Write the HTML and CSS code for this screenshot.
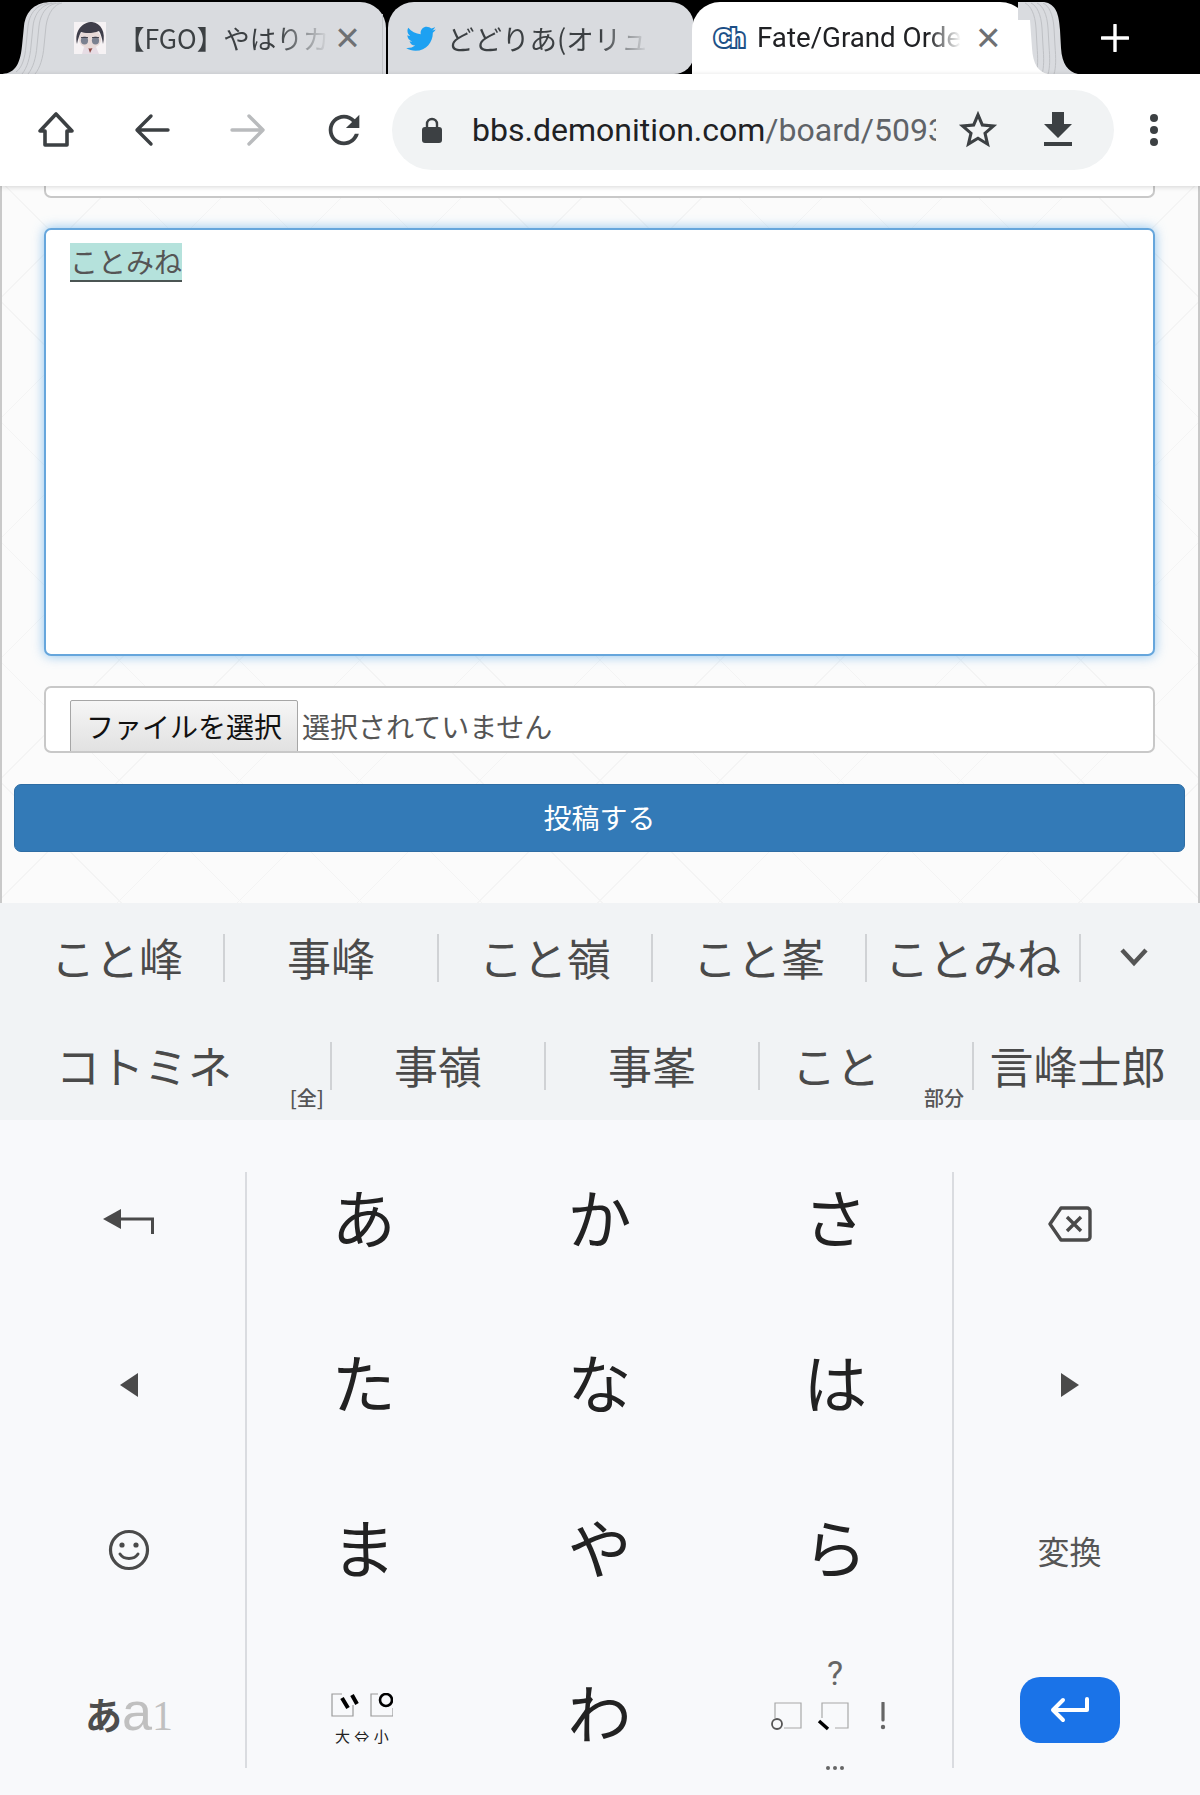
FILE: index.html
```html
<!DOCTYPE html>
<html lang="ja">
<head>
    <meta charset="UTF-8">
    <meta name="viewport" content="width=device-width, initial-scale=1.0">
    <title>Fate/Grand Order</title>
    <link rel="stylesheet" href="styles.css">
</head>
<body>
    <!-- Tab strip -->
    <div class="tabstrip">
        <svg class="stack stack-left" viewBox="0 0 62 74">
            <path d="M0 74 C14 74 20 66 22 46 L24 26 C26 10 36 2 52 2 L62 2 L62 74 Z" fill="#d9dbdf"/>
            <path d="M16 72 C22 68 25 58 26 46 L28 26 C30 10 40 3 52 3 M22 74 C27 68 30 58 31 46 L33 26 C35 10 45 3 56 3 M28 74 C33 68 36 58 37 46 L39 26 C41 10 50 3 60 3 M35 74 C40 68 43 58 44 46 L46 26 C48 12 55 4 62 3" fill="none" stroke="#bfc1c5" stroke-width="1"/>
        </svg>
        <div class="tab tab-first">
            <svg class="favicon" viewBox="0 0 32 32">
                <rect width="32" height="32" fill="#f6f2f4"/>
                <path d="M8 32 L10 25 H22 L25 32 Z" fill="#e6dce4"/>
                <path d="M14 25 L16 31 L19 25 Z" fill="#8f4a44"/>
                <ellipse cx="16" cy="17" rx="11" ry="9.5" fill="#e8dad8"/>
                <path d="M3 22 C0 8 9 0 18 0 C27 1 32 10 29 22 C28 16 27 12 25 9 C18 12 10 11 7 10 C5 14 4 17 3 22 Z" fill="#3f3e4a"/>
                <ellipse cx="10.5" cy="18.5" rx="3.6" ry="4" fill="#7b8190"/>
                <ellipse cx="21.5" cy="18.5" rx="3.6" ry="4" fill="#7b8190"/>
                <path d="M7 15.5 H14 M18 15.5 H25" stroke="#3f3e4a" stroke-width="0.9"/>
            </svg>
            <span class="tab-title">【FGO】やはりカ</span>
            <span class="tab-close">×</span>
            <i class="tab-edge"></i>
        </div>
        <div class="tab tab-second">
            <svg class="favicon bird" viewBox="0 0 24 24">
                <path fill="#1da1f2" d="M22.46 6c-.77.35-1.6.58-2.46.69.88-.53 1.56-1.37 1.88-2.38-.83.5-1.75.85-2.72 1.05C18.37 4.5 17.26 4 16 4c-2.35 0-4.27 1.92-4.27 4.29 0 .34.04.67.11.98C8.28 9.09 5.11 7.38 3 4.79c-.37.63-.58 1.37-.58 2.15 0 1.49.75 2.81 1.91 3.56-.71 0-1.37-.2-1.95-.5v.03c0 2.08 1.48 3.82 3.44 4.21a4.22 4.22 0 0 1-1.93.07 4.28 4.28 0 0 0 4 2.98 8.521 8.521 0 0 1-5.33 1.84c-.34 0-.68-.02-1.02-.06C3.44 20.29 5.7 21 8.12 21 16 21 20.33 14.46 20.33 8.79c0-.19 0-.37-.01-.56.84-.6 1.56-1.36 2.14-2.23z"/>
            </svg>
            <span class="tab-title">どどりあ(オリュ</span>
        </div>
        <div class="tab tab-active">
            <span class="ch-icon">Ch</span>
            <span class="tab-title">Fate/Grand Orde</span>
            <span class="tab-close">×</span>
        </div>
        <svg class="stack stack-right" viewBox="0 0 60 74">
            <path d="M0 2 L26 2 C38 4 41 14 42 30 L43 48 C44 64 50 72 60 74 L0 74 Z" fill="#d9dbdf"/>
            <path d="M18 74 C20 68 20 58 19 46 L18 28 C17 14 13 6 7 3 M24 74 C26 68 26 58 25 46 L24 28 C23 14 19 6 13 3 M30 74 C32 68 32 58 31 46 L30 28 C29 14 25 6 19 3 M36 74 C38 68 38 58 37 46 L36 28 C35 14 31 6 25 3" fill="none" stroke="#bfc1c5" stroke-width="1"/>
            <path d="M0 20 H12 L14 48 C15 64 20 72 30 74 L0 74 Z" fill="#fff"/>
        </svg>
        <span class="new-tab">
            <svg viewBox="0 0 28 28" width="28" height="28"><path d="M14 1V27M1 14H27" stroke="#fff" stroke-width="3.4" stroke-linecap="round"/></svg>
        </span>
    </div>

    <!-- Toolbar -->
    <div class="toolbar">
        <div class="tool-btn">
            <svg viewBox="0 0 40 40" width="40" height="40"><path d="M20 4 L4 21 H9 V35 H31 V21 H36 Z" fill="none" stroke="#3c4043" stroke-width="3.6" stroke-linejoin="round"/></svg>
        </div>
        <div class="tool-btn">
            <svg viewBox="0 0 40 40" width="40" height="40"><path d="M36 20 H6 M19 6 L5 20 L19 34" fill="none" stroke="#3c4043" stroke-width="3.4" stroke-linecap="round" stroke-linejoin="round"/></svg>
        </div>
        <div class="tool-btn">
            <svg viewBox="0 0 40 40" width="40" height="40"><path d="M4 20 H34 M21 6 L35 20 L21 34" fill="none" stroke="#b9bbbd" stroke-width="3.4" stroke-linecap="round" stroke-linejoin="round"/></svg>
        </div>
        <div class="tool-btn">
            <svg viewBox="0 0 24 24" width="46" height="46"><path fill="#3c4043" d="M17.65 6.35C16.2 4.9 14.21 4 12 4c-4.42 0-7.99 3.58-7.99 8s3.57 8 7.99 8c3.73 0 6.84-2.55 7.73-6h-2.08c-.82 2.33-3.04 4-5.65 4-3.31 0-6-2.69-6-6s2.69-6 6-6c1.66 0 3.14.69 4.22 1.78L13 11h7V4l-2.35 2.35z"/></svg>
        </div>
        <div class="omnibox">
            <svg class="lock" viewBox="0 0 20 26" width="20" height="26"><path d="M5 11 V7 a5 5 0 0 1 10 0 V11" fill="none" stroke="#3c4043" stroke-width="2.4"/><rect y="10" width="20" height="16" rx="3" fill="#3c4043"/></svg>
            <div class="url"><span>bbs.demonition.com</span><span class="url-path">/board/5093</span></div>
            <svg viewBox="0 0 24 24" width="46" height="46" class="star"><path fill="#3c4043" d="M22 9.24l-7.19-.62L12 2 9.19 8.63 2 9.24l5.46 4.73L5.82 21 12 17.27 18.18 21l-1.63-7.03L22 9.24zM12 15.4l-3.76 2.27 1-4.28-3.32-2.88 4.38-.38L12 6.1l1.71 4.04 4.38.38-3.32 2.88 1 4.28L12 15.4z"/></svg>
            <svg viewBox="0 0 24 24" width="48" height="48" class="download"><path fill="#3c4043" d="M19 9h-4V3H9v6H5l7 7 7-7zM5 18v2h14v-2H5z"/></svg>
        </div>
        <div class="menu-dots"><i></i><i></i><i></i></div>
    </div>

    <!-- Page -->
    <div class="page">
        <div class="field-stub"></div>
        <div class="comment-box"><span class="composing">ことみね</span></div>
        <div class="file-box">
            <span class="file-btn">ファイルを選択</span>
            <span class="file-name">選択されていません</span>
        </div>
        <button class="submit-btn" type="button">投稿する</button>
    </div>

    <!-- Conversion candidates -->
    <div class="candidates">
        <div class="cand-row cand-row-top">
            <span class="cand">こと峰</span>
            <span class="cand">事峰</span>
            <span class="cand">こと嶺</span>
            <span class="cand">こと峯</span>
            <span class="cand">ことみね</span>
            <span class="cand cand-more">
                <svg viewBox="0 0 30 20" width="30" height="20"><path d="M3 3 L15 16 L27 3" fill="none" stroke="#555" stroke-width="4.4"/></svg>
            </span>
        </div>
        <div class="cand-row cand-row-bottom">
            <span class="cand cand-kata">コトミネ<small>[全]</small></span>
            <span class="cand">事嶺</span>
            <span class="cand">事峯</span>
            <span class="cand cand-part">こと<small>部分</small></span>
            <span class="cand cand-last">言峰士郎</span>
        </div>
    </div>

    <!-- Keyboard -->
    <div class="keyboard">
        <i class="key-divider divider-left"></i>
        <i class="key-divider divider-right"></i>

        <div class="key side-left key-undo">
            <svg viewBox="0 0 52 26" width="52" height="26"><path d="M18 0 V20 L0 10 Z" fill="#4a4a4a"/><path d="M16 10 H49.5 V25" fill="none" stroke="#4a4a4a" stroke-width="3"/></svg>
        </div>
        <div class="key kana">あ</div>
        <div class="key kana">か</div>
        <div class="key kana">さ</div>
        <div class="key side-right key-back">
            <svg viewBox="0 0 44 36" width="44" height="36"><path d="M13 2 H39 a3 3 0 0 1 3 3 V31 a3 3 0 0 1 -3 3 H13 L2 18 Z" fill="none" stroke="#4a4a4a" stroke-width="3.4" stroke-linejoin="round"/><path d="M19 11 L33 25 M33 11 L19 25" stroke="#4a4a4a" stroke-width="3.4"/></svg>
        </div>

        <div class="key side-left">
            <svg viewBox="0 0 18 24" width="18" height="24"><path d="M18 0 V24 L0 12 Z" fill="#4a4a4a"/></svg>
        </div>
        <div class="key kana">た</div>
        <div class="key kana">な</div>
        <div class="key kana">は</div>
        <div class="key side-right">
            <svg viewBox="0 0 18 24" width="18" height="24"><path d="M0 0 V24 L18 12 Z" fill="#4a4a4a"/></svg>
        </div>

        <div class="key side-left">
            <svg viewBox="0 0 42 42" width="42" height="42"><circle cx="21" cy="21" r="18.5" fill="none" stroke="#4a4a4a" stroke-width="3.2"/><circle cx="14" cy="16" r="2.6" fill="#4a4a4a"/><circle cx="28" cy="16" r="2.6" fill="#4a4a4a"/><path d="M12 25 C16 31 26 31 30 25" fill="none" stroke="#4a4a4a" stroke-width="3" stroke-linecap="round"/></svg>
        </div>
        <div class="key kana">ま</div>
        <div class="key kana">や</div>
        <div class="key kana">ら</div>
        <div class="key side-right key-convert">変換</div>

        <div class="key side-left key-mode"><b>あ</b><span class="mode-a">a</span><span class="mode-one">1</span></div>
        <div class="key">
            <div class="dakuten">
                <svg viewBox="0 0 62 26" width="62" height="26">
                    <path d="M11 1 H1 V23 H22 V12" fill="none" stroke="#9a9a9a" stroke-width="1.2"/>
                    <path d="M11 5 L17 15 M21 2 L26 11" stroke="#000" stroke-width="4"/>
                    <path d="M47 1 H40 V23 H62 V15" fill="none" stroke="#9a9a9a" stroke-width="1.2"/>
                    <circle cx="55" cy="7" r="6" fill="none" stroke="#000" stroke-width="2.6"/>
                </svg>
                <span class="dakuten-label">大 ⇔ 小</span>
            </div>
        </div>
        <div class="key kana">わ</div>
        <div class="key">
            <div class="punct">
                <span class="punct-q">?</span>
                <svg viewBox="0 0 130 32" width="130" height="32">
                    <path d="M5 16 V1 H31 V26 H14" fill="none" stroke="#a8a8a8" stroke-width="1.2"/>
                    <circle cx="7" cy="22" r="5" fill="none" stroke="#555" stroke-width="1.8"/>
                    <path d="M52 16 V1 H78 V26 H65" fill="none" stroke="#a8a8a8" stroke-width="1.2"/>
                    <path d="M49 19 L58 27" stroke="#000" stroke-width="3.4"/>
                    <path d="M113 1 V18" stroke="#666" stroke-width="3.2" stroke-linecap="round"/>
                    <circle cx="113" cy="25" r="2.2" fill="#666"/>
                </svg>
                <span class="punct-dots"><i></i><i></i><i></i></span>
            </div>
        </div>
        <div class="key side-right key-enter">
            <span class="enter-btn">
                <svg viewBox="0 0 40 26" width="40" height="26"><path d="M37 2 V13 H3 M13 3 L3 13 L13 23" fill="none" stroke="#fff" stroke-width="4" stroke-linecap="round" stroke-linejoin="round"/></svg>
            </span>
        </div>
    </div>
</body>
</html>
```

FILE: styles.css
```css
/* Basic Reset */
* {
    margin: 0;
    padding: 0;
    box-sizing: border-box;
}

body {
    width: 1200px;
    height: 1795px;
    overflow: hidden;
    display: flex;
    flex-direction: column;
    font-family: 'Noto Sans CJK JP', 'Noto Sans', sans-serif;
    background: #f8f9fb;
}

/* Tab strip */
.tabstrip {
    height: 74px;
    background: #000;
    display: flex;
    align-items: flex-end;
    flex: none;
}

.stack {
    display: block;
    flex: none;
    height: 74px;
}

.stack-left {
    width: 62px;
}

.stack-right {
    width: 60px;
    margin-left: -12px;
    position: relative;
    z-index: 2;
}

.tab {
    height: 72px;
    display: flex;
    align-items: center;
    flex: none;
    position: relative;
    background: #d9dbdf;
    font-size: 26.5px;
    color: #3c4043;
}

.tab-first {
    width: 324px;
    padding-left: 12px;
    border-radius: 0 26px 0 0;
}

.tab-edge {
    position: absolute;
    right: 3px;
    bottom: 0;
    width: 1px;
    height: 60px;
    background: #c3c5c9;
}

.tab-second {
    width: 306px;
    padding-left: 16px;
    margin-left: 2px;
    font-size: 27.5px;
    border-radius: 26px 24px 20px 0;
}

.tab-active {
    width: 338px;
    margin-left: -2px;
    padding-left: 22px;
    background: #fff;
    color: #202124;
    border-radius: 28px 30px 0 0;
    z-index: 1;
}

.favicon {
    width: 32px;
    height: 32px;
    flex: none;
    display: block;
}

.bird {
    width: 34px;
    height: 34px;
}

.ch-icon {
    font-family: 'Liberation Sans', sans-serif;
    font-weight: bold;
    font-size: 25px;
    letter-spacing: -2px;
    color: #fff;
    -webkit-text-stroke: 4px #1d4f86;
    paint-order: stroke fill;
    width: 34px;
    flex: none;
}

.tab-title {
    flex: none;
    white-space: nowrap;
    line-height: 40px;
    -webkit-mask-image: linear-gradient(to right, #000 76%, transparent 100%);
    mask-image: linear-gradient(to right, #000 76%, transparent 100%);
}

.tab-first .tab-title {
    margin-left: 12px;
}

.tab-second .tab-title {
    margin-left: 9px;
}

.tab-active .tab-title {
    margin-left: 9px;
    font-family: Roboto, sans-serif;
    font-size: 27.7px;
    -webkit-mask-image: linear-gradient(to right, #000 84%, transparent 100%);
    mask-image: linear-gradient(to right, #000 84%, transparent 100%);
}

.tab-close {
    font-family: 'Liberation Sans', sans-serif;
    font-size: 42px;
    color: #6e7073;
    line-height: 1;
    margin-left: 6px;
}

.tab-active .tab-close {
    margin-left: 15px;
}

.new-tab {
    flex: none;
    width: 28px;
    height: 28px;
    margin: 0 0 22px 23px;
}

/* Toolbar */
.toolbar {
    height: 112px;
    flex: none;
    background: #fff;
    display: flex;
    align-items: center;
    padding-left: 8px;
    position: relative;
    z-index: 2;
    box-shadow: 0 1px 5px rgba(0,0,0,0.16);
}

.tool-btn {
    width: 96px;
    height: 48px;
    flex: none;
    display: flex;
    align-items: center;
    justify-content: center;
}

.tool-btn svg {
    display: block;
}

.omnibox {
    width: 722px;
    height: 80px;
    background: #f1f3f4;
    border-radius: 40px;
    display: flex;
    align-items: center;
    padding-left: 30px;
}

.lock {
    flex: none;
}

.url {
    width: 464px;
    margin-left: 30px;
    white-space: nowrap;
    overflow: hidden;
    font-family: Roboto, sans-serif;
    font-size: 32px;
    color: #202124;
}

.url-path {
    color: #5f6368;
}

.star {
    flex: none;
    margin-left: 19px;
}

.download {
    flex: none;
    margin-left: 33px;
}

.menu-dots {
    margin-left: 36px;
    display: flex;
    flex-direction: column;
    gap: 4px;
}

.menu-dots i {
    display: block;
    width: 8px;
    height: 8px;
    border-radius: 50%;
    background: #3c4043;
}

/* Page */
.page {
    height: 717px;
    flex: none;
    padding: 0 43px 0 42px;
    border-left: 2px solid #c9c9c9;
    border-right: 2px solid #c9c9c9;
    background-color: #fbfbfb;
    background-image:
        repeating-linear-gradient(45deg, transparent 0 84px, #f4f4f4 84px 85px),
        repeating-linear-gradient(-45deg, transparent 0 84px, #f4f4f4 84px 85px);
}

.field-stub {
    height: 12px;
    background: #fff;
    border: 2px solid #c8c8c8;
    border-top: none;
    border-radius: 0 0 7px 7px;
    margin-bottom: 30px;
}

.comment-box {
    height: 428px;
    background: #fff;
    border: 2px solid #66a6dc;
    border-radius: 7px;
    box-shadow: 0 0 12px rgba(102,175,233,0.75);
    padding: 11px 24px;
    margin-bottom: 30px;
    font-size: 28px;
    line-height: 40px;
    color: #555;
}

.composing {
    display: inline-block;
    height: 39px;
    background: #b5e2dc;
    border-bottom: 2px solid #4b5553;
    line-height: 36px;
}

.file-box {
    height: 67px;
    background: #fff;
    border: 2px solid #c8c8c8;
    border-radius: 7px;
    padding: 12px 0 0 24px;
    margin-bottom: 31px;
    overflow: hidden;
    display: flex;
    align-items: flex-start;
    font-size: 28px;
    color: #555;
}

.file-btn {
    flex: none;
    width: 228px;
    height: 60px;
    text-align: center;
    border: 1px solid #a6a6a6;
    border-radius: 2px;
    background: linear-gradient(#f6f6f6, #dedede);
    color: #111;
    line-height: 50px;
    font-size: 28px;
}

.file-name {
    margin-left: 4px;
    line-height: 52px;
}

.submit-btn {
    display: block;
    width: 1171px;
    height: 68px;
    margin-left: -30px;
    background: #337ab7;
    border: 1px solid #2e6da4;
    border-radius: 7px;
    color: #fff;
    font-family: inherit;
    font-size: 28px;
    padding-bottom: 3px;
}

/* Candidates */
.candidates {
    height: 217px;
    flex: none;
    background: #f1f3f5;
    color: #4a4a4a;
    font-size: 44px;
}

.cand-row {
    display: flex;
    height: 48px;
    align-items: stretch;
}

.cand-row-top {
    margin-top: 31px;
    padding-left: 11px;
}

.cand-row-bottom {
    margin-top: 60px;
}

.cand {
    width: 214px;
    flex: none;
    display: flex;
    align-items: center;
    justify-content: center;
    position: relative;
    border-right: 2px solid #d0d2d5;
    padding-bottom: 2px;
    line-height: 1;
    white-space: nowrap;
}

.cand:last-child {
    border-right: none;
}

.cand-more {
    width: 105px;
}

.cand-kata {
    width: 332px;
    justify-content: flex-start;
    padding-left: 56px;
}

.cand-part {
    padding-right: 60px;
}

.cand-last {
    padding-right: 7px;
}

.cand small {
    position: absolute;
    right: 8px;
    bottom: -20px;
    font-size: 20px;
    font-weight: 500;
    line-height: 24px;
    color: #555;
}

.cand-kata small {
    right: 6px;
}

/* Keyboard */
.keyboard {
    flex: 1;
    padding: 17px 12px 0;
    display: grid;
    grid-template-columns: 234px repeat(3, 235.67px) 235px;
    grid-auto-rows: 165px;
    position: relative;
    background: #f8f9fb;
}

.key-divider {
    position: absolute;
    top: 52px;
    width: 2px;
    height: 596px;
    background: #dadce0;
}

.divider-left {
    left: 245px;
}

.divider-right {
    left: 952px;
}

.key {
    display: flex;
    align-items: center;
    justify-content: center;
    line-height: 1;
}

.kana {
    font-size: 64px;
    color: #222;
    padding-bottom: 9px;
}

.key svg {
    display: block;
}

.key-undo {
    padding-top: 5px;
}

.key-back {
    padding-top: 9px;
}

.key-enter {
    padding-bottom: 9px;
}

.key-convert {
    font-size: 32px;
    color: #555;
    padding-right: 2px;
}

.key-mode {
    align-items: baseline;
    padding-top: 52px;
    font-size: 37px;
    color: #4d4d4d;
}

.key-mode b {
    font-weight: bold;
}

.mode-a {
    font-family: 'Liberation Sans', sans-serif;
    font-size: 54px;
    color: #c0c0c0;
}

.mode-one {
    font-family: 'Liberation Serif', serif;
    font-size: 42px;
    color: #c0c0c0;
}

.dakuten {
    display: flex;
    flex-direction: column;
    align-items: center;
    padding-top: 10px;
    margin-right: 4px;
}

.dakuten-label {
    font-size: 15px;
    word-spacing: 1px;
    margin-top: 7px;
    color: #222;
    line-height: 20px;
}

.punct {
    display: flex;
    flex-direction: column;
    align-items: center;
    margin-top: -3px;
}

.punct-q {
    font-family: Roboto, sans-serif;
    font-size: 34px;
    line-height: 34px;
    margin-bottom: 12px;
    color: #666;
}

.punct-dots {
    display: flex;
    gap: 3px;
    margin-top: 32px;
}

.punct-dots i {
    display: block;
    width: 4px;
    height: 4px;
    border-radius: 50%;
    background: #666;
}

.enter-btn {
    width: 100px;
    height: 66px;
    background: #1a73e8;
    border-radius: 20px;
    display: flex;
    align-items: center;
    justify-content: center;
}
```
